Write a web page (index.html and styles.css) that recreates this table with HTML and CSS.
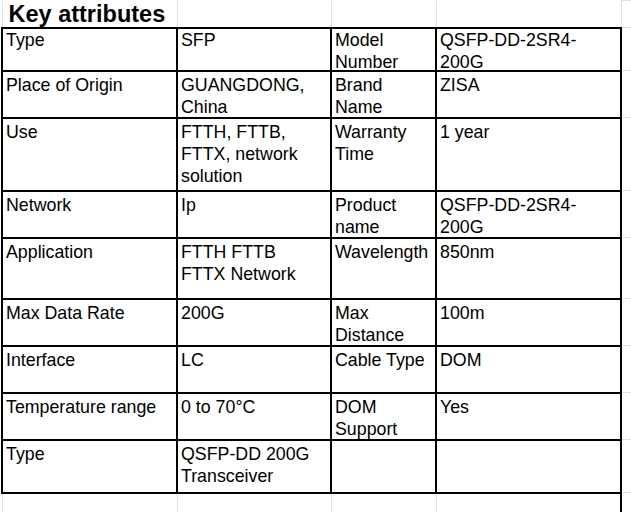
FILE: index.html
```html
<!DOCTYPE html>
<html>
<head>
<meta charset="utf-8">
<link rel="stylesheet" href="styles.css">
</head>
<body>
<table class="sheet">
  <colgroup>
    <col class="c1"><col class="c2"><col class="c3"><col class="c4"><col class="c5">
  </colgroup>
  <tr class="r-title">
    <td class="title"><div class="v">Key attributes</div></td><td><div class="v"></div></td><td><div class="v"></div></td><td><div class="v"></div></td><td class="pad"><div class="v"></div></td>
  </tr>
  <tr class="h43">
    <td><div class="v">Type</div></td><td><div class="v">SFP</div></td><td><div class="v">Model<br>Number</div></td><td><div class="v">QSFP-DD-2SR4-<br>200G</div></td><td class="pad"><div class="v"></div></td>
  </tr>
  <tr class="h47">
    <td><div class="v">Place of Origin</div></td><td><div class="v">GUANGDONG,<br>China</div></td><td><div class="v">Brand<br>Name</div></td><td><div class="v">ZISA</div></td><td class="pad"><div class="v"></div></td>
  </tr>
  <tr class="h73">
    <td><div class="v">Use</div></td><td><div class="v">FTTH, FTTB,<br>FTTX, network<br>solution</div></td><td><div class="v">Warranty<br>Time</div></td><td><div class="v">1 year</div></td><td class="pad"><div class="v"></div></td>
  </tr>
  <tr class="h47">
    <td><div class="v">Network</div></td><td><div class="v">Ip</div></td><td><div class="v">Product<br>name</div></td><td><div class="v">QSFP-DD-2SR4-<br>200G</div></td><td class="pad"><div class="v"></div></td>
  </tr>
  <tr class="h61">
    <td><div class="v">Application</div></td><td><div class="v">FTTH FTTB<br>FTTX Network</div></td><td><div class="v">Wavelength</div></td><td><div class="v">850nm</div></td><td class="pad"><div class="v"></div></td>
  </tr>
  <tr class="h47">
    <td><div class="v">Max Data Rate</div></td><td><div class="v">200G</div></td><td><div class="v">Max<br>Distance</div></td><td><div class="v">100m</div></td><td class="pad"><div class="v"></div></td>
  </tr>
  <tr class="h47">
    <td><div class="v">Interface</div></td><td><div class="v">LC</div></td><td><div class="v">Cable Type</div></td><td><div class="v">DOM</div></td><td class="pad"><div class="v"></div></td>
  </tr>
  <tr class="h47">
    <td><div class="v">Temperature range</div></td><td><div class="v">0 to 70°C</div></td><td><div class="v">DOM<br>Support</div></td><td><div class="v">Yes</div></td><td class="pad"><div class="v"></div></td>
  </tr>
  <tr class="h53">
    <td><div class="v">Type</div></td><td><div class="v">QSFP-DD 200G<br>Transceiver</div></td><td><div class="v"></div></td><td><div class="v"></div></td><td class="pad"><div class="v"></div></td>
  </tr>
  <tr class="r-empty">
    <td><div class="v"></div></td><td><div class="v"></div></td><td><div class="v"></div></td><td><div class="v"></div></td><td class="pad"><div class="v"></div></td>
  </tr>
</table>
</body>
</html>
```

FILE: styles.css
```css
html, body {
  margin: 0;
  padding: 0;
  background: #ffffff;
  overflow: hidden;
}

.sheet {
  margin-left: 1px;
  border-collapse: collapse;
  table-layout: fixed;
  width: 640px;
  font-family: "Liberation Sans", Arial, sans-serif;
  font-size: 17.8px;
  line-height: 22.2px;
  color: #000;
}

.c1 { width: 175px; }
.c2 { width: 154px; }
.c3 { width: 105px; }
.c4 { width: 185px; }
.c5 { width: 21px; }

.sheet td {
  border: 2px solid #000;
  padding: 0;
  vertical-align: top;
  white-space: nowrap;
}

.v {
  box-sizing: border-box;
  padding: 2px 3px 0 3px;
}

.sheet td.pad {
  border: 1px solid #e1e1e1;
  border-left: 2px solid #000;
}

.r-title td {
  border: 1px solid #e1e1e1;
  border-top: none;
  border-bottom: 2px solid #000;
}

.r-title .v {
  height: 26px;
  padding: 0;
}

.r-title td.pad {
  border-left: 1px solid #e1e1e1;
  border-bottom: 1px solid #e1e1e1;
}

.r-title td.title .v {
  font-weight: bold;
  font-size: 23.5px;
  line-height: 26px;
  padding: 0 0 0 6px;
}

.r-empty td {
  border: 1px solid #e1e1e1;
  border-top: 2px solid #000;
}

.r-empty .v {
  height: 30px;
}

.r-empty td.pad {
  border-top: 1px solid #e1e1e1;
}

.h43 .v { height: 41px; padding-top: 0.5px; line-height: 22px; }
.h47 .v { height: 45px; }
.h53 .v { height: 51px; }
.h61 .v { height: 59px; }
.h73 .v { height: 71px; }
```
